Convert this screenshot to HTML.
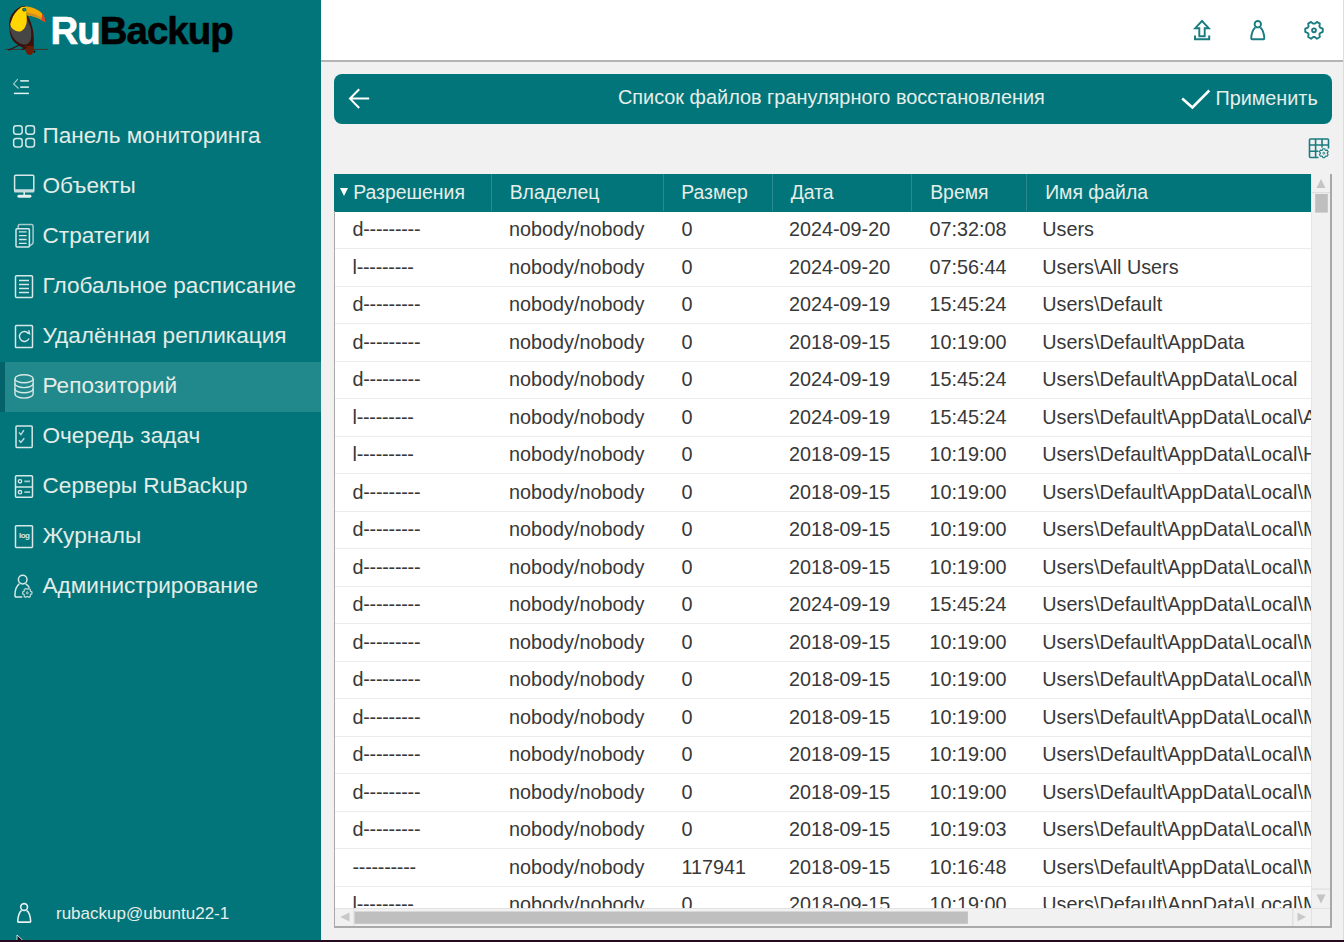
<!DOCTYPE html>
<html><head><meta charset="utf-8">
<style>
*{margin:0;padding:0;box-sizing:border-box}
html,body{width:1344px;height:942px;overflow:hidden;background:#f1f1f1;font-family:"Liberation Sans",sans-serif;}
body{position:relative}
.abs{position:absolute}
.t{position:absolute;line-height:1;white-space:nowrap}
#side{position:absolute;left:0;top:0;width:321.3px;height:940px;background:#02757a}
#sel{position:absolute;left:5px;top:361.5px;width:316px;height:50px;background:#21888b}
#selbar{position:absolute;left:0;top:361.5px;width:5px;height:50px;background:#03626a}
.mi{position:absolute;left:42.5px;font-size:22.6px;color:#e4ece8;line-height:1;white-space:nowrap}
.ico{position:absolute;left:10px;width:28px;height:28px;overflow:visible}
#hdr{position:absolute;left:321px;top:0;width:1023px;height:60px;background:#fff}
#hdrline{position:absolute;left:321px;top:60px;width:1023px;height:1.5px;background:#b4b4b4}
#tbar{position:absolute;left:334px;top:74px;width:997.5px;height:49.5px;background:#02757a;border-radius:8px}
#tbl{position:absolute;left:334px;top:174px;width:997px;height:753px;background:#fff}
#thead{position:absolute;left:0;top:0;width:977px;height:37.5px;background:#02757a}
.hc{position:absolute;top:8.7px;font-size:19.4px;color:#e6eeea;line-height:1;white-space:nowrap}
.vd{position:absolute;top:0;width:1px;height:37px;background:#2a8a8d}
#rows{position:absolute;left:1px;top:37.5px;width:976px;height:696.5px;overflow:hidden;background:#fff}
.row{position:absolute;left:0;width:976px;height:37.5px;border-bottom:1px solid #ececec}
.c{position:absolute;top:8.6px;font-size:19.8px;color:#383838;line-height:1;white-space:nowrap}
.c1{left:17.5px;letter-spacing:-0.25px}.c2{left:174px}.c3{left:346.5px}.c4{left:454px}.c5{left:594.5px}.c6{left:707.3px}
#lb{position:absolute;left:0;top:37px;width:1.3px;height:716px;background:#a8a8a8}
#rb{position:absolute;left:996px;top:0;width:1.5px;height:753px;background:#a8a8a8}
#bb{position:absolute;left:0;top:752.1px;width:997.5px;height:1.6px;background:#aaaaaa}
#vs{position:absolute;left:977px;top:0;width:19px;height:734px;background:#f1f1f1;border-left:1px solid #e6e6e6}
#hs{position:absolute;left:1px;top:734px;width:976px;height:18px;background:#f1f1f1;border-top:1px solid #e2e2e2}
#corner{position:absolute;left:977px;top:734px;width:19px;height:18px;background:#f1f1f1;border-top:1px solid #e2e2e2;border-left:1px solid #e2e2e2}
#bottom{position:absolute;left:0;top:939.6px;width:1344px;height:3px;background:#260a20}
</style></head>
<body>
<div id="side">
  <!-- toucan -->
  <svg class="abs" style="left:0;top:0" width="56" height="60" viewBox="0 0 56 60">
    <path d="M25.5 5.7 C19 6 12 11 9.8 19 C8.8 24 9.2 32 11 37 C13 42 17 45 24.2 48.4 L33.8 48.4 L33.8 38 C33.5 30 32 24 27.4 15 Z" fill="#3b120c"/>
    <path d="M9.5 26.7 C10 31 11.5 35 14 38.5 C17 42 20.5 44.4 24.2 44.6 C28 44.6 30.2 42 31 38 C31.8 33 31 27 29.3 24.2 C28.5 22 27.6 20 26.7 19 Z" fill="#464646"/>
    <path d="M11.5 20.4 C13 15 16.5 10.5 21.7 7 L26.7 6.4 L26.7 16.6 C27 20 26.8 23 26 24.8 C25 28 23.5 30 21 31.2 C19 31.8 17.2 31.5 15 30.5 C12.5 29 10.5 27 10.2 24.2 Z" fill="#ffd600"/>
    <path d="M26.8 6.6 C31 6.8 36 8.5 40 11.5 C43 14 44.8 17.5 45.2 22.3 C43 20.6 41 19.5 38 18.2 C34.5 16.8 30.5 15.6 27.2 15.3 Z" fill="#f7a900"/>
    <path d="M27.2 12.4 C32 13 37 14.8 42 18.3 L44.6 21.5 C42 20 39.5 18.8 36 17.3 C33 16.2 30 15.6 27.2 15.3 Z" fill="#c98f22"/>
    <path d="M42.2 13.8 C43.8 15.3 45 18 45.3 22.3 L41.4 20.2 L41.8 17 Z" fill="#d8432a"/>
    <circle cx="24.2" cy="9.6" r="1.9" fill="#1f2a20"/>
    <circle cx="24.3" cy="9.5" r="1.3" fill="#19908a"/>
    <path d="M24.8 45.9 L33.8 45.9 L33.2 52.2 C32.5 54 31.2 54.9 30 54.9 C28.5 54.9 27.2 54 26.8 53.4 L25.2 50.3 Z" fill="#6e1c04"/>
    <circle cx="34.4" cy="51.6" r="1.1" fill="#111"/>
    <path d="M5.4 49.4 L47.8 49.4" stroke="#4a2a22" stroke-width="0.9"/>
    <path d="M8.3 50.3 L19.1 45.2 M21.7 49.7 L26.8 47.1" stroke="#3a1008" stroke-width="1.2"/>
  </svg>
  <div class="t" style="left:50.5px;top:11.8px;font-size:38.4px;font-weight:bold;letter-spacing:-0.95px;-webkit-text-stroke:0.6px"><span style="color:#fff">Ru</span><span style="color:#000">Backup</span></div>
  <!-- collapse icon -->
  <svg class="abs" style="left:8px;top:72px" width="32" height="28" viewBox="8 72 32 28">
    <path d="M17.8 79.2 L13.6 83.9 L18.6 88.5" fill="none" stroke="#a8d0d0" stroke-width="1.1"/>
    <path d="M20.2 80.9 H28.9 M20.2 87.2 H28.9" stroke="#c4e0e0" stroke-width="1.7"/>
    <path d="M13.9 93.4 H28.9" stroke="#e6f2f2" stroke-width="1.5"/>
  </svg>
  <div id="selbar"></div><div id="sel"></div>
  <!-- menu icons -->
  <svg class="abs" style="left:0;top:100px" width="44" height="520" viewBox="0 100 44 520" fill="none" stroke="#d6e8e8" stroke-width="1.5">
    <!-- grid -->
    <g stroke-width="1.5"><rect x="13.65" y="125.85" width="8.5" height="8.4" rx="2.4"/><rect x="25.85" y="125.85" width="8.6" height="8.4" rx="2.4"/>
    <rect x="13.65" y="138.45" width="8.5" height="8.5" rx="2.4"/><rect x="25.85" y="138.45" width="8.6" height="8.5" rx="2.4"/></g>
    <!-- monitor -->
    <path d="M14.6 190 V176.3 Q14.6 175.3 15.6 175.3 H32.8 Q33.8 175.3 33.8 176.3 V190"/>
    <rect x="14" y="189.2" width="20.4" height="3.2" rx="1" fill="#e6eeee" stroke="none" opacity="0.85"/>
    <path d="M24.2 192 V195" stroke-width="1.6"/>
    <rect x="17.4" y="194.8" width="14" height="2.9" rx="1.4" fill="#e6eeee" stroke="none"/>
    <!-- strategies -->
    <path d="M18.2 228.3 V226.2 Q18.2 224.6 19.8 224.6 H31.4 Q33.1 224.6 33.1 226.3 V242.6 Q33.1 243.7 31.9 244.4 L29.6 245.8" stroke="#a8cccc"/>
    <rect x="16" y="228.7" width="13.4" height="18.3" rx="1"/>
    <path d="M18.9 231.9 H26.6 M18.9 235.6 H26.6 M18.9 239.5 H26.6 M18.9 243.4 H26.6" stroke-width="1.3"/>
    <!-- schedule -->
    <rect x="15.5" y="275.8" width="17" height="21.6" rx="1"/>
    <path d="M19 280.5 H29 M19 284.5 H29 M19 288.5 H29 M19 292.5 H29" stroke-width="1.4"/>
    <!-- replication -->
    <rect x="15.5" y="325.6" width="17" height="21.9" rx="0.8"/>
    <path d="M28.5 333.5 A5 5 0 1 0 29 338.5" stroke-width="1.4"/>
    <path d="M26.5 332 L29.5 333.8 L28.8 330.2" stroke-width="1.3"/>
    <!-- database -->
    <g stroke-width="1.4"><ellipse cx="24.05" cy="378.7" rx="9.1" ry="4"/>
    <path d="M14.95 378.7 V394.1 A9.1 4 0 0 0 33.15 394.1 V378.7"/>
    <path d="M14.95 383.6 A9.1 4 0 0 0 33.15 383.6 M14.95 388.7 A9.1 4 0 0 0 33.15 388.7"/></g>
    <!-- queue -->
    <rect x="16" y="426" width="16.2" height="21.4" rx="0.8"/>
    <path d="M19 432.4 L20.9 434.6 L23.9 430.2 M19 440.3 L20.9 442.5 L24.3 438.3" stroke-width="1.4" stroke="#c0dcdc"/>
    <!-- servers -->
    <rect x="15.5" y="475.8" width="17" height="21.5" rx="1"/>
    <path d="M15.5 487 H32.5"/>
    <circle cx="20" cy="481.3" r="1.7" stroke-width="1.3"/><circle cx="20" cy="492.2" r="1.7" stroke-width="1.3"/>
    <path d="M24.3 481.3 H30 M24.3 492.2 H30" stroke-width="1.8" stroke="#a8cccc"/>
    <!-- log -->
    <rect x="15.5" y="525.8" width="17" height="21.6" rx="0.8"/>
    <!-- admin -->
    <circle cx="22.7" cy="579.6" r="4.3"/>
    <path d="M19.3 583.8 Q15 587 14.9 595.3 Q14.9 597.1 16.6 597.1 H22.3"/>
    <path d="M25.6 583.8 Q28.2 585.2 29.3 587.8"/>
    <path d="M30.68 591.40 L31.90 591.92 L31.90 593.88 L30.68 594.40 L30.29 595.07 L30.44 596.39 L28.75 597.37 L27.69 596.58 L26.91 596.58 L25.85 597.37 L24.16 596.39 L24.31 595.07 L23.92 594.40 L22.70 593.88 L22.70 591.92 L23.92 591.40 L24.31 590.73 L24.16 589.41 L25.85 588.43 L26.91 589.22 L27.69 589.22 L28.75 588.43 L30.44 589.41 L30.29 590.73 Z" stroke="#bcd8d8" stroke-width="1.2" stroke-linejoin="round"/>
    <circle cx="27.3" cy="592.9" r="1" stroke="#bcd8d8" stroke-width="1"/>
  </svg>
  <div class="t" style="left:18.9px;top:531.6px;font-size:8px;font-weight:bold;color:#d6e8e8;letter-spacing:-0.45px">log</div>
  <div class="mi" style="top:124.9px">Панель мониторинга</div>
  <div class="mi" style="top:174.9px">Объекты</div>
  <div class="mi" style="top:224.9px">Стратегии</div>
  <div class="mi" style="top:274.9px">Глобальное расписание</div>
  <div class="mi" style="top:324.9px">Удалённая репликация</div>
  <div class="mi" style="top:374.9px">Репозиторий</div>
  <div class="mi" style="top:424.9px">Очередь задач</div>
  <div class="mi" style="top:474.9px">Серверы RuBackup</div>
  <div class="mi" style="top:524.9px">Журналы</div>
  <div class="mi" style="top:574.9px">Администрирование</div>
  <!-- user -->
  <svg class="abs" style="left:14px;top:900px" width="22" height="26" viewBox="14 900 22 26" fill="none" stroke="#e8f0f0" stroke-width="1.6">
    <circle cx="24.1" cy="907" r="3.4"/>
    <path d="M21.6 910.3 Q18.2 913 17.7 921.3 Q17.7 922.1 18.5 922.1 H29.9 Q30.7 922.1 30.7 921.3 Q30.2 913 26.6 910.3"/>
  </svg>
  <div class="t" style="left:56px;top:904.7px;font-size:17px;color:#e6eeea">rubackup@ubuntu22-1</div>
  <!-- cursor -->
  <svg class="abs" style="left:15px;top:934px" width="12" height="8" viewBox="0 0 12 8">
    <path d="M2 1 L2 10 L4 10 L9.5 8 Z" fill="#111" stroke="#fff" stroke-width="0.8"/>
  </svg>
</div>

<div id="hdr"></div><div id="hdrline"></div>
<!-- header icons -->
<svg class="abs" style="left:1186px;top:14px" width="150" height="34" viewBox="1186 14 150 34" fill="none" stroke="#1a7c80" stroke-width="1.9">
  <path d="M1202 21 L1195.2 28.2 H1199.3 V36.2 H1204.7 V28.2 H1208.8 Z" stroke-linejoin="miter"/>
  <path d="M1195 35.5 V39.2 H1209.2 V35.5" stroke-width="2"/>
  <circle cx="1257.8" cy="24.2" r="3.2"/>
  <path d="M1255.2 27.5 Q1251.5 31 1251.2 38.3 Q1251.2 39.2 1252 39.2 H1263.5 Q1264.3 39.2 1264.3 38.3 Q1264 31 1260.4 27.5"/>
  <path d="M1320.12 27.57 L1322.74 28.63 L1322.74 31.97 L1320.12 33.03 L1319.42 34.24 L1319.82 37.04 L1316.93 38.70 L1314.70 36.96 L1313.30 36.96 L1311.07 38.70 L1308.18 37.04 L1308.58 34.24 L1307.88 33.03 L1305.26 31.97 L1305.26 28.63 L1307.88 27.57 L1308.58 26.36 L1308.18 23.56 L1311.07 21.90 L1313.30 23.64 L1314.70 23.64 L1316.93 21.90 L1319.82 23.56 L1319.42 26.36 Z" stroke-linejoin="round"/>
  <circle cx="1314" cy="30.3" r="1.9"/>
</svg>

<div id="tbar"></div>
<svg class="abs" style="left:345px;top:86px" width="28" height="26" viewBox="345 86 28 26" fill="none" stroke="#fff" stroke-width="2">
  <path d="M359.2 89.2 L350 98.6 L359.2 108 M350 98.6 H369.2"/>
</svg>
<div class="t" style="left:617.9px;top:87.9px;font-size:19.9px;color:#e6eeea">Список файлов гранулярного восстановления</div>
<svg class="abs" style="left:1178px;top:86px" width="36" height="26" viewBox="1178 86 36 26" fill="none" stroke="#fff" stroke-width="2.6">
  <path d="M1182.2 98.5 L1192.4 107.4 L1209.3 90.5"/>
</svg>
<div class="t" style="left:1215.5px;top:89px;font-size:19.8px;color:#e6eeea">Применить</div>
<!-- table settings icon -->
<svg class="abs" style="left:1306px;top:136px" width="26" height="25" viewBox="1306 136 26 25" fill="none" stroke="#1a7c80" stroke-width="1.6">
  <path d="M1318.5 157.5 H1310.5 Q1309.5 157.5 1309.5 156.5 V140 Q1309.5 139 1310.5 139 H1327.5 Q1328.5 139 1328.5 140 V148.5"/>
  <path d="M1309.5 145 H1328.5 M1309.5 151.3 H1318.5 M1315.6 139 V157.5 M1322 139 V147.5"/>
  <path d="M1322.35 150.12 L1322.80 148.71 L1324.80 148.71 L1325.25 150.12 L1325.74 150.41 L1327.19 150.09 L1328.19 151.82 L1327.19 152.92 L1327.19 153.48 L1328.19 154.58 L1327.19 156.31 L1325.74 155.99 L1325.25 156.28 L1324.80 157.69 L1322.80 157.69 L1322.35 156.28 L1321.86 155.99 L1320.41 156.31 L1319.41 154.58 L1320.41 153.48 L1320.41 152.92 L1319.41 151.82 L1320.41 150.09 L1321.86 150.41 Z" stroke-width="1.1" stroke-linejoin="round"/>
  <circle cx="1323.8" cy="153.2" r="1" stroke-width="0.9"/>
</svg>

<div id="tbl">
  <div id="thead">
    <svg class="abs" style="left:5px;top:13px" width="10" height="10" viewBox="0 0 10 10"><path d="M1 1 H9 L5 9 Z" fill="#fff"/></svg>
    <div class="hc" style="left:19.2px">Разрешения</div>
    <div class="vd" style="left:156.5px"></div>
    <div class="hc" style="left:175.7px">Владелец</div>
    <div class="vd" style="left:329px"></div>
    <div class="hc" style="left:347.2px">Размер</div>
    <div class="vd" style="left:438px"></div>
    <div class="hc" style="left:456.7px">Дата</div>
    <div class="vd" style="left:577px"></div>
    <div class="hc" style="left:596.2px">Время</div>
    <div class="vd" style="left:691.5px"></div>
    <div class="hc" style="left:711.2px">Имя файла</div>
  </div>
  <div id="rows">
<div class="row" style="top:0.0px"><span class="c c1">d---------</span><span class="c c2">nobody/nobody</span><span class="c c3">0</span><span class="c c4">2024-09-20</span><span class="c c5">07:32:08</span><span class="c c6">Users</span></div>
<div class="row" style="top:37.5px"><span class="c c1">l---------</span><span class="c c2">nobody/nobody</span><span class="c c3">0</span><span class="c c4">2024-09-20</span><span class="c c5">07:56:44</span><span class="c c6">Users\All Users</span></div>
<div class="row" style="top:75.0px"><span class="c c1">d---------</span><span class="c c2">nobody/nobody</span><span class="c c3">0</span><span class="c c4">2024-09-19</span><span class="c c5">15:45:24</span><span class="c c6">Users\Default</span></div>
<div class="row" style="top:112.5px"><span class="c c1">d---------</span><span class="c c2">nobody/nobody</span><span class="c c3">0</span><span class="c c4">2018-09-15</span><span class="c c5">10:19:00</span><span class="c c6">Users\Default\AppData</span></div>
<div class="row" style="top:150.0px"><span class="c c1">d---------</span><span class="c c2">nobody/nobody</span><span class="c c3">0</span><span class="c c4">2024-09-19</span><span class="c c5">15:45:24</span><span class="c c6">Users\Default\AppData\Local</span></div>
<div class="row" style="top:187.5px"><span class="c c1">l---------</span><span class="c c2">nobody/nobody</span><span class="c c3">0</span><span class="c c4">2024-09-19</span><span class="c c5">15:45:24</span><span class="c c6">Users\Default\AppData\Local\Application Data</span></div>
<div class="row" style="top:225.0px"><span class="c c1">l---------</span><span class="c c2">nobody/nobody</span><span class="c c3">0</span><span class="c c4">2018-09-15</span><span class="c c5">10:19:00</span><span class="c c6">Users\Default\AppData\Local\History</span></div>
<div class="row" style="top:262.5px"><span class="c c1">d---------</span><span class="c c2">nobody/nobody</span><span class="c c3">0</span><span class="c c4">2018-09-15</span><span class="c c5">10:19:00</span><span class="c c6">Users\Default\AppData\Local\Microsoft</span></div>
<div class="row" style="top:300.0px"><span class="c c1">d---------</span><span class="c c2">nobody/nobody</span><span class="c c3">0</span><span class="c c4">2018-09-15</span><span class="c c5">10:19:00</span><span class="c c6">Users\Default\AppData\Local\Microsoft\Windows</span></div>
<div class="row" style="top:337.5px"><span class="c c1">d---------</span><span class="c c2">nobody/nobody</span><span class="c c3">0</span><span class="c c4">2018-09-15</span><span class="c c5">10:19:00</span><span class="c c6">Users\Default\AppData\Local\Microsoft\Windows\GameExplorer</span></div>
<div class="row" style="top:375.0px"><span class="c c1">d---------</span><span class="c c2">nobody/nobody</span><span class="c c3">0</span><span class="c c4">2024-09-19</span><span class="c c5">15:45:24</span><span class="c c6">Users\Default\AppData\Local\Microsoft\Windows\History</span></div>
<div class="row" style="top:412.5px"><span class="c c1">d---------</span><span class="c c2">nobody/nobody</span><span class="c c3">0</span><span class="c c4">2018-09-15</span><span class="c c5">10:19:00</span><span class="c c6">Users\Default\AppData\Local\Microsoft\Windows\INetCache</span></div>
<div class="row" style="top:450.0px"><span class="c c1">d---------</span><span class="c c2">nobody/nobody</span><span class="c c3">0</span><span class="c c4">2018-09-15</span><span class="c c5">10:19:00</span><span class="c c6">Users\Default\AppData\Local\Microsoft\Windows\INetCookies</span></div>
<div class="row" style="top:487.5px"><span class="c c1">d---------</span><span class="c c2">nobody/nobody</span><span class="c c3">0</span><span class="c c4">2018-09-15</span><span class="c c5">10:19:00</span><span class="c c6">Users\Default\AppData\Local\Microsoft\Windows\Shell</span></div>
<div class="row" style="top:525.0px"><span class="c c1">d---------</span><span class="c c2">nobody/nobody</span><span class="c c3">0</span><span class="c c4">2018-09-15</span><span class="c c5">10:19:00</span><span class="c c6">Users\Default\AppData\Local\Microsoft\Windows\WinX</span></div>
<div class="row" style="top:562.5px"><span class="c c1">d---------</span><span class="c c2">nobody/nobody</span><span class="c c3">0</span><span class="c c4">2018-09-15</span><span class="c c5">10:19:00</span><span class="c c6">Users\Default\AppData\Local\Microsoft\Windows\WinX\Group1</span></div>
<div class="row" style="top:600.0px"><span class="c c1">d---------</span><span class="c c2">nobody/nobody</span><span class="c c3">0</span><span class="c c4">2018-09-15</span><span class="c c5">10:19:03</span><span class="c c6">Users\Default\AppData\Local\Microsoft\Windows\WinX\Group2</span></div>
<div class="row" style="top:637.5px"><span class="c c1">----------</span><span class="c c2">nobody/nobody</span><span class="c c3">117941</span><span class="c c4">2018-09-15</span><span class="c c5">10:16:48</span><span class="c c6">Users\Default\AppData\Local\Microsoft\Windows\WinX\Group2\1</span></div>
<div class="row" style="top:675.0px"><span class="c c1">l---------</span><span class="c c2">nobody/nobody</span><span class="c c3">0</span><span class="c c4">2018-09-15</span><span class="c c5">10:19:00</span><span class="c c6">Users\Default\AppData\Local\Microsoft\Windows\WinX\Group2\2</span></div>
  </div>
  <div id="vs">
    <svg class="abs" style="left:-1px;top:0" width="19" height="734" viewBox="1311 174 19 734">
      <path d="M1321 179 L1325.5 188 H1316.5 Z" fill="#c4c4c4"/>
      <rect x="1311" y="192" width="19" height="1.2" fill="#dedede"/>
      <rect x="1315.2" y="194" width="12.6" height="18.6" fill="#bfbfbf"/>
      <rect x="1311" y="888.5" width="19" height="1.2" fill="#dedede"/>
      <path d="M1316.5 894.5 H1325.5 L1321 903.5 Z" fill="#c4c4c4"/>
    </svg>
  </div>
  <div id="hs">
    <svg class="abs" style="left:-1px;top:-1px" width="977" height="19" viewBox="334 908 977 19">
      <path d="M340.3 917 L349.5 912.6 V921.4 Z" fill="#c8c8c8"/>
      <rect x="353.3" y="909" width="1.2" height="17" fill="#dedede"/>
      <rect x="354.5" y="911.5" width="613.4" height="12.3" fill="#bfbfbf"/>
      <rect x="1292.2" y="909" width="1.2" height="17" fill="#dedede"/>
      <path d="M1306 917 L1297.5 912.8 V921.2 Z" fill="#c8c8c8"/>
    </svg>
  </div>
  <div id="corner"></div>
  <div id="lb"></div><div id="rb"></div><div id="bb"></div>
</div>
<div class="abs" style="left:1342.5px;top:0;width:1.5px;height:940px;background:#dcdcdc"></div>
<div id="bottom"></div>
</body></html>
